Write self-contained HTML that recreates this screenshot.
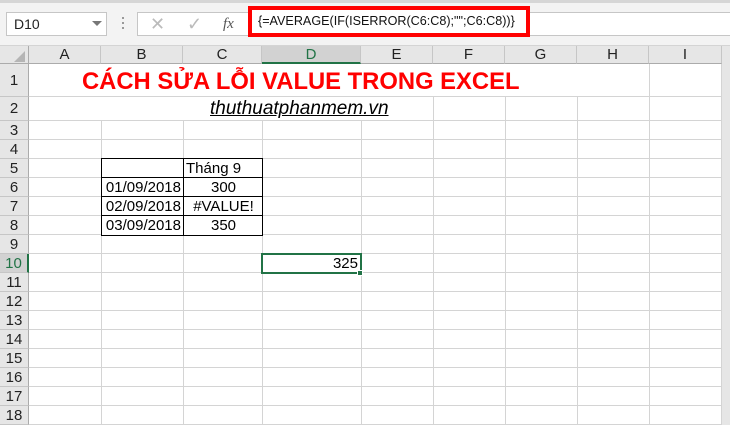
<!DOCTYPE html>
<html style="width:730px;height:425px;overflow:hidden"><head><meta charset="utf-8"><style>
body{margin:0;width:730px;height:425px;overflow:hidden;background:#fff;font-family:"Liberation Sans",Arial,sans-serif;position:relative}
div{position:absolute;box-sizing:border-box}
.ch{top:46px;height:18px;background:#e6e6e6;border-right:1px solid #c6c6c6;border-bottom:1px solid #ababab;font-size:15px;color:#222;text-align:center;line-height:18px}
.rh{left:0;width:29px;background:#e6e6e6;border-bottom:1px solid #c6c6c6;border-right:1px solid #ababab;font-size:15px;color:#222;text-align:center}
.vl{top:64px;bottom:0;width:1px;background:#d4d4d4}
.hl{left:29px;width:693px;height:1px;background:#d4d4d4}
.c{font-size:15px;color:#000;line-height:19px;height:20px}
</style></head><body>
<div style="left:0;top:0;width:730px;height:46px;background:#f3f3f3;border-top:3px solid #d6d6d6;border-bottom:1px solid #d4d4d4"></div>
<div style="left:6px;top:12px;width:101px;height:24px;background:#fff;border:1px solid #c6c6c6;font-size:14px;line-height:22px;padding-left:7px;color:#222">D10</div>
<div style="left:92px;top:21px;width:0;height:0;border-left:5px solid transparent;border-right:5px solid transparent;border-top:5px solid #777"></div>
<div style="left:122px;top:17px;width:2px;height:2px;background:#999;box-shadow:0 5px #999,0 10px #999"></div>
<div style="left:137px;top:12px;width:600px;height:24px;background:#fff;border:1px solid #c6c6c6"></div>
<div style="left:150px;top:12px;font-size:18px;color:#bbb;line-height:24px">✕</div>
<div style="left:187px;top:12px;font-size:18px;color:#bbb;line-height:24px">✓</div>
<div style="left:223px;top:12px;font-size:15px;color:#555;line-height:24px;font-family:'Liberation Serif',serif;font-style:italic">fx</div>
<div style="left:248px;top:6px;width:282px;height:31px;border:4px solid #f00;background:#fff;font-size:12.6px;line-height:23px;padding-left:6px;color:#111;white-space:nowrap">{=AVERAGE(IF(ISERROR(C6:C8);"";C6:C8))}</div>
<div style="left:0;top:46px;width:29px;height:18px;background:#e6e6e6;border-right:1px solid #ababab;border-bottom:1px solid #ababab"></div>
<div style="left:14px;top:51px;width:0;height:0;border-left:11px solid transparent;border-bottom:11px solid #b5b5b5"></div>
<div class="ch" style="left:29px;width:72px">A</div>
<div class="ch" style="left:101px;width:82px">B</div>
<div class="ch" style="left:183px;width:79px">C</div>
<div class="ch" style="left:262px;width:99px;background:#d2d2d2;border-bottom:2px solid #217346;color:#217346">D</div>
<div class="ch" style="left:361px;width:72px">E</div>
<div class="ch" style="left:433px;width:72px">F</div>
<div class="ch" style="left:505px;width:72px">G</div>
<div class="ch" style="left:577px;width:72px">H</div>
<div class="ch" style="left:649px;width:73px">I</div>
<div style="left:722px;top:46px;width:8px;height:379px;background:#e6e6e6"></div>
<div class="rh" style="top:64px;height:33px;line-height:33px">1</div>
<div class="rh" style="top:97px;height:24px;line-height:24px">2</div>
<div class="rh" style="top:121px;height:19px;line-height:19px">3</div>
<div class="rh" style="top:140px;height:19px;line-height:19px">4</div>
<div class="rh" style="top:159px;height:19px;line-height:19px">5</div>
<div class="rh" style="top:178px;height:19px;line-height:19px">6</div>
<div class="rh" style="top:197px;height:19px;line-height:19px">7</div>
<div class="rh" style="top:216px;height:19px;line-height:19px">8</div>
<div class="rh" style="top:235px;height:19px;line-height:19px">9</div>
<div class="rh" style="top:254px;height:19px;line-height:19px;background:#d2d2d2;color:#217346;border-right:2px solid #217346">10</div>
<div class="rh" style="top:273px;height:19px;line-height:19px">11</div>
<div class="rh" style="top:292px;height:19px;line-height:19px">12</div>
<div class="rh" style="top:311px;height:19px;line-height:19px">13</div>
<div class="rh" style="top:330px;height:19px;line-height:19px">14</div>
<div class="rh" style="top:349px;height:19px;line-height:19px">15</div>
<div class="rh" style="top:368px;height:19px;line-height:19px">16</div>
<div class="rh" style="top:387px;height:19px;line-height:19px">17</div>
<div class="rh" style="top:406px;height:19px;line-height:19px">18</div>
<div class="vl" style="left:101px"></div>
<div class="vl" style="left:183px"></div>
<div class="vl" style="left:262px"></div>
<div class="vl" style="left:361px"></div>
<div class="vl" style="left:433px"></div>
<div class="vl" style="left:505px"></div>
<div class="vl" style="left:577px"></div>
<div class="vl" style="left:649px"></div>
<div class="vl" style="left:721px"></div>
<div class="hl" style="top:96px"></div>
<div class="hl" style="top:120px"></div>
<div class="hl" style="top:139px"></div>
<div class="hl" style="top:158px"></div>
<div class="hl" style="top:177px"></div>
<div class="hl" style="top:196px"></div>
<div class="hl" style="top:215px"></div>
<div class="hl" style="top:234px"></div>
<div class="hl" style="top:253px"></div>
<div class="hl" style="top:272px"></div>
<div class="hl" style="top:291px"></div>
<div class="hl" style="top:310px"></div>
<div class="hl" style="top:329px"></div>
<div class="hl" style="top:348px"></div>
<div class="hl" style="top:367px"></div>
<div class="hl" style="top:386px"></div>
<div class="hl" style="top:405px"></div>
<div class="hl" style="top:424px"></div>
<div style="left:29px;top:64px;width:620px;height:33px;background:#fff;border-bottom:1px solid #d4d4d4"></div>
<div style="left:29px;top:97px;width:404px;height:24px;background:#fff;border-bottom:1px solid #d4d4d4"></div>
<div style="left:82px;top:66px;font-size:23.8px;font-weight:bold;color:#f00;white-space:nowrap;line-height:32px">CÁCH SỬA LỖI VALUE TRONG EXCEL</div>
<div style="left:210px;top:98px;font-size:19px;font-style:italic;text-decoration:underline;color:#000;line-height:22px;white-space:nowrap">thuthuatphanmem.vn</div>
<div style="left:101px;top:158px;width:162px;height:78px;border:1px solid #000;background:#fff"></div>
<div style="left:183px;top:158px;width:1px;height:78px;background:#000"></div>
<div style="left:101px;top:177px;width:162px;height:1px;background:#000"></div>
<div style="left:101px;top:196px;width:162px;height:1px;background:#000"></div>
<div style="left:101px;top:215px;width:162px;height:1px;background:#000"></div>
<div class="c" style="left:186px;top:159px">Tháng 9</div>
<div class="c" style="left:101px;top:178px;width:80px;text-align:right">01/09/2018</div>
<div class="c" style="left:101px;top:197px;width:80px;text-align:right">02/09/2018</div>
<div class="c" style="left:101px;top:216px;width:80px;text-align:right">03/09/2018</div>
<div class="c" style="left:184px;top:178px;width:79px;text-align:center">300</div>
<div class="c" style="left:184px;top:197px;width:79px;text-align:center">#VALUE!</div>
<div class="c" style="left:184px;top:216px;width:79px;text-align:center">350</div>
<div style="left:261px;top:253px;width:101px;height:21px;border:2px solid #217346"></div>
<div class="c" style="left:262px;top:254px;width:96px;text-align:right">325</div>
<div style="left:357px;top:270px;width:6px;height:6px;background:#217346;border:1px solid #fff"></div>
</body></html>
